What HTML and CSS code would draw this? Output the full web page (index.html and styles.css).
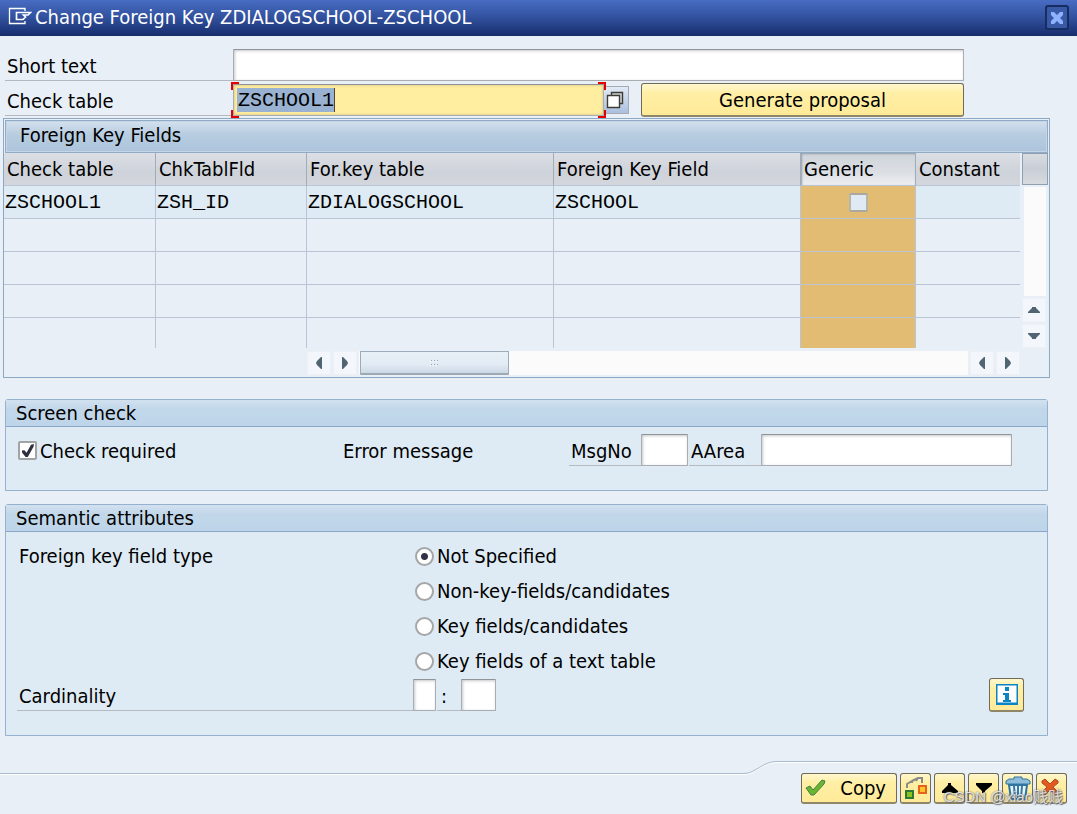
FILE: index.html
```html
<!DOCTYPE html>
<html lang="en">
<head>
<meta charset="utf-8">
<title>Change Foreign Key ZDIALOGSCHOOL-ZSCHOOL</title>
<link rel="stylesheet" href="styles.css">
</head>
<body>
<div class="dialog">
  <header class="titlebar">
    <svg class="title-icon" width="24" height="18" viewBox="0 0 24 18" fill="none" stroke="#fff" aria-hidden="true">
      <path d="M17 4V1.500H1.500V16.500H17V14" stroke-width="1.300"/>
      <path d="M8.500 5.500H22.500L20 8H15.500L17.500 10L15 12.500H8.500Z" stroke-width="1.700"/>
    </svg>
    <h1 class="title">Change Foreign Key ZDIALOGSCHOOL-ZSCHOOL</h1>
    <button class="close" type="button" aria-label="Close">
      <svg width="14" height="14" viewBox="0 0 14 14" aria-hidden="true"><path d="M1 1H4L7 4L10 1H13V4L10 7L13 10V13H10L7 10L4 13H1V10L4 7L1 4Z" fill="#8fb2ff"/></svg>
    </button>
  </header>

  <main class="content">
    <div class="form">
      <div class="form-row">
        <label class="form-label" for="short">Short text</label>
        <input class="field grow" id="short" type="text">
      </div>
      <div class="form-row">
        <label class="form-label" for="check">Check table</label>
        <div class="focus-wrap">
          <input class="field field-active" id="check" type="text" value="ZSCHOOL1">
          <i class="corner tl"></i><i class="corner tr"></i><i class="corner bl"></i><i class="corner br"></i>
        </div>
        <button class="help" type="button" aria-label="Value help">
          <svg width="18" height="18" viewBox="0 0 18 18" stroke="#403c32" stroke-width="1.400" aria-hidden="true"><path d="M5.500 1.500H16.500V12.500H5.500Z" fill="#c8d2d6"/><path d="M1.500 4.500H13.500V16.500H1.500Z" fill="#fff"/></svg>
        </button>
        <button class="btn generate" type="button">Generate proposal</button>
      </div>
    </div>

    <section class="grid-panel">
      <h2 class="grid-title">Foreign Key Fields</h2>
      <div class="grid-body">
        <table class="keys">
          <colgroup><col class="c-first"><col class="c-small"><col class="c-wide"><col class="c-wide"><col class="c-gen"><col></colgroup>
          <thead>
            <tr><th>Check table</th><th>ChkTablFld</th><th>For.key table</th><th>Foreign Key Field</th><th class="sel">Generic</th><th>Constant</th></tr>
          </thead>
          <tbody>
            <tr class="filled"><td>ZSCHOOL1</td><td>ZSH_ID</td><td>ZDIALOGSCHOOL</td><td>ZSCHOOL</td><td class="gen"><input class="tick tick-cell" type="checkbox" aria-label="Generic"></td><td></td></tr>
            <tr><td></td><td></td><td></td><td></td><td class="gen"></td><td></td></tr>
            <tr><td></td><td></td><td></td><td></td><td class="gen"></td><td></td></tr>
            <tr><td></td><td></td><td></td><td></td><td class="gen"></td><td></td></tr>
            <tr><td></td><td></td><td></td><td></td><td class="gen"></td><td></td></tr>
          </tbody>
        </table>
        <div class="vscroll">
          <button class="config" type="button" aria-label="Configuration"></button>
          <div class="vtrack"></div>
          <button class="arrow" type="button" aria-label="Scroll up"><svg width="14" height="8" viewBox="0 0 14 8"><path d="M1 7V6L5 2V1H9V2L13 6V7Z" fill="#506472"/></svg></button>
          <button class="arrow" type="button" aria-label="Scroll down"><svg width="14" height="8" viewBox="0 0 14 8"><path d="M1 1V2L5 6V7H9V6L13 2V1Z" fill="#506472"/></svg></button>
        </div>
      </div>
      <div class="hscroll">
        <button class="arrow" type="button" aria-label="First column"><svg width="8" height="14" viewBox="0 0 8 14"><path d="M7 1H6L2 5L1 7L2 9L6 13H7Z" fill="#506472"/></svg></button>
        <button class="arrow" type="button" aria-label="Scroll right"><svg width="8" height="14" viewBox="0 0 8 14"><path d="M1 1H2L6 5L7 7L6 9L2 13H1Z" fill="#506472"/></svg></button>
        <div class="htrack"><div class="thumb"><svg width="9" height="7" viewBox="0 0 9 7" fill="#9aa9b8"><path d="M1 1h1v1H1zM4 1h1v1H4zM7 1h1v1H7zM1 5h1v1H1zM4 5h1v1H4zM7 5h1v1H7z"/><path d="M0 2h1v1H0zM3 2h1v1H3zM6 2h1v1H6zM0 6h1v1H0zM3 6h1v1H3zM6 6h1v1H6z" fill="#fff"/></svg></div></div>
        <button class="arrow" type="button" aria-label="Scroll left"><svg width="8" height="14" viewBox="0 0 8 14"><path d="M7 1H6L2 5L1 7L2 9L6 13H7Z" fill="#506472"/></svg></button>
        <button class="arrow" type="button" aria-label="Last column"><svg width="8" height="14" viewBox="0 0 8 14"><path d="M1 1H2L6 5L7 7L6 9L2 13H1Z" fill="#506472"/></svg></button>
      </div>
    </section>

    <section class="group screen">
      <h2 class="group-title">Screen check</h2>
      <div class="screen-row">
        <label class="check-label"><input class="tick" type="checkbox" checked>Check required</label>
        <span class="error-label">Error message</span>
        <label class="lined msgno" for="msgno">MsgNo</label>
        <input class="field w-msg" id="msgno" type="text">
        <label class="lined aarea" for="aarea">AArea</label>
        <input class="field w-area" id="aarea" type="text">
      </div>
    </section>

    <section class="group semantic">
      <h2 class="group-title">Semantic attributes</h2>
      <div class="type-row" role="radiogroup" aria-labelledby="type-label">
        <span class="type-label" id="type-label">Foreign key field type</span>
        <div class="radios">
          <label class="radio-label"><input class="radio" type="radio" name="type" checked>Not Specified</label>
          <label class="radio-label"><input class="radio" type="radio" name="type">Non-key-fields/candidates</label>
          <label class="radio-label"><input class="radio" type="radio" name="type">Key fields/candidates</label>
          <label class="radio-label"><input class="radio" type="radio" name="type">Key fields of a text table</label>
        </div>
      </div>
      <div class="card-row">
        <label class="lined cardinality" for="left">Cardinality</label>
        <input class="field w-left" id="left" type="text">
        <label class="lined colon" for="right">:</label>
        <input class="field w-right" id="right" type="text">
        <button class="btn info" type="button" aria-label="Information">
          <svg width="22" height="22" viewBox="0 0 22 22"><path d="M0 0H22V21H0Z" fill="#0a84c4"/><path d="M1.500 1.500H20.500V18.500H1.500Z" fill="#fff"/><path d="M9 3H13V7H9ZM7 9H13V16H15V18H7V16H9V11H7Z" fill="#0a84c4"/></svg>
        </button>
      </div>
    </section>
  </main>

  <footer class="footer">
    <div class="edge">
      <span class="edge-left"></span>
      <svg class="edge-curve" width="32" height="14" viewBox="0 0 32 14" fill="none"><path d="M0 13.500C11 13.500 19 1.500 32 1.500" stroke="#fff"/><path d="M0 12.500C11 12.500 19 .5 32 .5" stroke="#a9b9ce"/></svg>
      <span class="edge-right"></span>
    </div>
    <div class="actions">
      <button class="btn copy" type="button">
        <svg width="21" height="18" viewBox="0 0 21 18"><path d="M1 9L5 7L8 11L17 1L20 2L19 5L9 16H6Z" fill="#6cb52d" stroke="#3f8050"/></svg>
        <span>Copy</span>
      </button>
      <button class="btn tool" type="button" aria-label="Replace">
        <svg width="24" height="24" viewBox="0 0 24 24" fill="none"><path d="M3 12V8L8 5V7M8 5L14 2H18V7M14 2L12 5" stroke="#888c88" stroke-width="2"/><path d="M2 15H9V22H2Z" fill="#8cc21f" stroke="#2c7838" stroke-width="2"/><path d="M15 10H22V17H15Z" fill="#ffc52c" stroke="#e7631d" stroke-width="2"/></svg>
      </button>
      <button class="btn tool" type="button" aria-label="Previous"><svg width="18" height="12" viewBox="0 0 18 12"><path d="M1 11V9L7 3V1H10V3L17 9V11Z"/></svg></button>
      <button class="btn tool" type="button" aria-label="Next"><svg width="18" height="12" viewBox="0 0 18 12"><path d="M1 1V3L7 9V11H10V9L17 3V1Z"/></svg></button>
      <button class="btn tool" type="button" aria-label="Delete">
        <svg width="26" height="24" viewBox="0 0 26 24"><path d="M1 8V5L4 3H9V1H17V3H22L25 5V8Z" fill="#8dbddb" stroke="#30749f"/><path d="M4 9H22L20 23H6Z" fill="#e8f5fb" stroke="#30749f" stroke-width="2"/><path d="M9 10L10 22M13 10V22M17 10L16 22" stroke="#367aa5" stroke-width="2"/></svg>
      </button>
      <button class="btn tool" type="button" aria-label="Cancel">
        <svg class="cancel-icon" width="18" height="18" viewBox="0 0 18 18"><path d="M1 3L4 1L9 6L14 1L17 3V5L12 9L17 14V16L14 17L9 12L4 17L1 16V14L6 9L1 5Z" fill="#e4581b" stroke="#a84730"/></svg>
      </button>
      <span class="watermark">CSDN @xiao贱贱</span>
    </div>
  </footer>
</div>
</body>
</html>
```
FILE: styles.css
```css
* { box-sizing: border-box; }
body {
  margin: 0;
  background: #e8eff7;
  color: #000;
  font: 20px/24px "DejaVu Sans Condensed", "Noto Sans", sans-serif;
}
button, input { font: inherit; color: inherit; margin: 0; }
h1, h2 { margin: 0; font-size: inherit; font-weight: normal; }
svg { display: block; flex: none; }
.dialog { min-height: 100vh; display: flex; flex-direction: column; }

.titlebar {
  display: flex; align-items: center;
  height: 36px; padding: 0 8px;
  background: linear-gradient(#486cc2, #3454a2 45%, #182f70);
  border-bottom: 1px solid #173064;
  color: #fff;
}
.title-icon { margin: 0 3px 4px 0; }
.title { flex: 1; padding-bottom: 2px; white-space: nowrap; }
.close {
  display: flex; align-items: center; justify-content: center;
  width: 24px; height: 25px; padding: 0;
  background: #3859a6; border: 2px solid #172c61; border-radius: 3px;
}

.content { flex: 1; padding: 13px 27px 0 3px; }
.form { display: flex; flex-direction: column; gap: 3px; padding: 0 86px 0 2px; }
.form-row { display: flex; height: 32px; }
.form-label { width: 228px; padding: 5px 2px 0; border-bottom: 1px solid #b5b8bc; }
.field {
  height: 32px; min-width: 0; padding: 0 4px;
  background: #fff;
  border: 1px solid #a9adb1; border-top-color: #919497; border-radius: 1px;
  box-shadow: inset 1px 1px 3px #c4c7cb;
  outline: none;
}
.grow { flex: 1; }
.focus-wrap { position: relative; flex: 1; display: flex; }
.field-active {
  flex: 1;
  font-family: "Liberation Mono", monospace;
  background:
    linear-gradient(#57432f, #57432f) 100px 3px / 1px 24px no-repeat,
    linear-gradient(#99b2d1, #99b2d1) 3px 3px / 97px 24px no-repeat,
    #ffee9f;
  box-shadow: inset 0 0 3px #c8b979;
}
.corner { position: absolute; width: 8px; height: 8px; border: 0 solid #e30000; pointer-events: none; }
.tl { left: -2px; top: -2px; border-width: 2px 0 0 2px; }
.tr { right: -2px; top: -2px; border-width: 2px 2px 0 0; }
.bl { left: -2px; bottom: -2px; border-width: 0 0 2px 2px; }
.br { right: -2px; bottom: -2px; border-width: 0 2px 2px 0; }
.help {
  display: flex; align-items: center; width: 25px; height: 28px; padding: 0 2px;
  margin: 2px 12px 0 0;
  background: linear-gradient(#e2eaf5, #aabfdf);
  border: 1px solid #a5a9b1; border-left: 0; border-radius: 1px;
}
.btn {
  display: flex; align-items: center; justify-content: center; padding: 0;
  background: linear-gradient(#fff7ce, #ffefa5 30%, #ffea98);
  border: 1px solid #706b58; border-bottom: 2px solid #8f8668; border-radius: 3px;
}
.generate { width: 323px; height: 34px; margin-top: -1px; }

.grid-panel { border: 1px solid #8ba8c4; margin-top: 2px; padding: 1px 1px 2px 0; }
.grid-title {
  height: 33px; padding: 2px 14px; margin-left: 1px;
  border: 1px solid #91abc7;
  background: linear-gradient(#d4e1ee, #b7cce0 45%, #acc4dc);
  box-shadow: inset 0 0 0 1px #c4d6e6;
}
.grid-body { display: flex; gap: 2px; }
.keys { flex: 1; width: 0; table-layout: fixed; border-collapse: separate; border-spacing: 0; }
.c-first { width: 152px; }
.c-small { width: 151px; }
.c-wide { width: 247px; }
.c-gen { width: 115px; }
.keys th {
  height: 33px; padding: 0 3px; text-align: left; font-weight: normal; white-space: nowrap;
  background: linear-gradient(#dcdfe4, #ced2da 60%, #d4d7dc);
  border-right: 1px solid #a0acb8; border-bottom: 1px solid #b9c4d4;
}
.keys th:last-child { border-right: 0; }
.keys th.sel {
  background: linear-gradient(#cfd4da, #dbdfe4 60%, #eceef1);
  box-shadow: inset 1px 1px 2px #8f9ca9;
}
.keys td {
  height: 33px; padding: 2px 1px 0; border-right: 1px solid #b9c4d4; border-bottom: 1px solid #b9c4d4;
  font-family: "Liberation Mono", monospace; line-height: 24px;
}
.keys td:last-child { border-right: 0; }
.keys tr:last-child td { height: 30px; border-bottom: 0; }
.filled { background: #deebf5; }
.keys td.gen { background: #e2bc72; text-align: center; }
.vscroll { display: flex; flex-direction: column; gap: 2px; width: 26px; }
.config {
  height: 32px; padding: 0; background: linear-gradient(#d9dde2, #c8ced5 50%, #d8dce0);
  border: 1px solid #8f9fad;
}
.vtrack { flex: 1; background: #fbfbfc; margin: 0 2px; }
.arrow {
  display: flex; align-items: center; justify-content: center;
  width: 24px; height: 24px; padding: 0;
  background: #f3f6fb; border: 1px solid #edf0f5;
}
.hscroll { display: flex; gap: 2px; margin: 3px 28px 0 303px; }
.htrack { flex: 1; background: #fbfbfc; }
.thumb {
  display: flex; align-items: center; justify-content: center;
  width: 149px; height: 24px; margin-left: 1px;
  border: 1px solid #9babba; border-bottom: 2px solid #9daab4; border-radius: 1px;
  background: linear-gradient(#e8f0f7, #e2eaf4 60%, #cbd9e6);
}

.group { margin: 0 2px; border: 1px solid #95b1cd; border-radius: 3px 3px 0 0; background: #deebf4; }
.group-title {
  height: 27px; padding: 1px 10px;
  background: linear-gradient(#d2e1f0, #c1d7e9 35%, #bed4e9);
  border-bottom: 1px solid #89a8c9;
}
.screen { margin-top: 21px; padding-bottom: 24px; }
.semantic { margin-top: 13px; padding-bottom: 24px; }
.screen-row { display: flex; margin: 7px 35px 0 12px; }
.check-label { display: flex; align-items: center; gap: 3px; width: 325px; padding-top: 1px; }
.error-label { flex: 1; padding-top: 5px; }
.tick {
  appearance: none; position: relative; flex: none; width: 19px; height: 19px;
  border: 2px solid #a2a3a5; border-radius: 2px; background: #fff;
}
.tick:checked::before {
  content: ""; position: absolute; left: 2px; top: 1px; width: 12px; height: 13px; background: #302f3f;
  clip-path: polygon(0 50%, 20% 48%, 38% 68%, 75% 6%, 100% 0, 96% 22%, 48% 100%, 30% 100%, 0 65%);
}
.tick-cell { display: inline-block; vertical-align: middle; background: #dfeaf4; border-color: #aaa79c #b8b5a9; }
.lined { padding: 5px 2px 0; border-bottom: 1px solid #b5b8bc; }
.msgno { width: 72px; }
.w-msg { width: 47px; }
.aarea { width: 72px; margin-left: 1px; }
.w-area { width: 251px; }
.type-row { display: flex; padding: 7px 13px 0; }
.type-label { width: 396px; padding-top: 5px; }
.radio-label { display: flex; align-items: center; gap: 3px; height: 35px; padding-bottom: 1px; }
.radio {
  appearance: none; width: 19px; height: 19px; border: 2px solid #a5a6a8; border-radius: 50%; background: #fff;
}
.radio:checked { background: radial-gradient(circle, #303047 3px, #fff 4px); }
.card-row { display: flex; padding: 0 23px 0 11px; }
.cardinality { width: 396px; }
.w-left { width: 23px; }
.colon { width: 24px; margin-left: 1px; padding-left: 4px; }
.w-right { width: 35px; }
.info { width: 35px; height: 34px; margin: -1px 0 -1px auto; }

.edge { display: flex; height: 14px; }
.edge-left { flex: 1; align-self: flex-end; border-top: 1px solid #a9b9ce; border-bottom: 1px solid #fff; }
.edge-right { width: 301px; align-self: flex-start; border-top: 1px solid #a9b9ce; border-bottom: 1px solid #fff; }
.actions { position: relative; display: flex; justify-content: flex-end; gap: 3px; padding: 0 10px 10px; margin-top: -2px; }
.actions .btn { height: 31px; }
.actions .copy { width: 96px; justify-content: space-between; padding: 0 10px 0 3px; }
.tool { width: 31px; }
.cancel-icon { margin: 0 4px 2px 0; }
.watermark {
  position: absolute; right: 14px; bottom: 9px;
  font: 15px/16px "Liberation Sans", "Noto Sans CJK SC", sans-serif;
  color: rgba(255, 255, 255, .75); text-shadow: 0 0 2px #555, 1px 1px 1px #777;
  white-space: nowrap; pointer-events: none;
}
```
